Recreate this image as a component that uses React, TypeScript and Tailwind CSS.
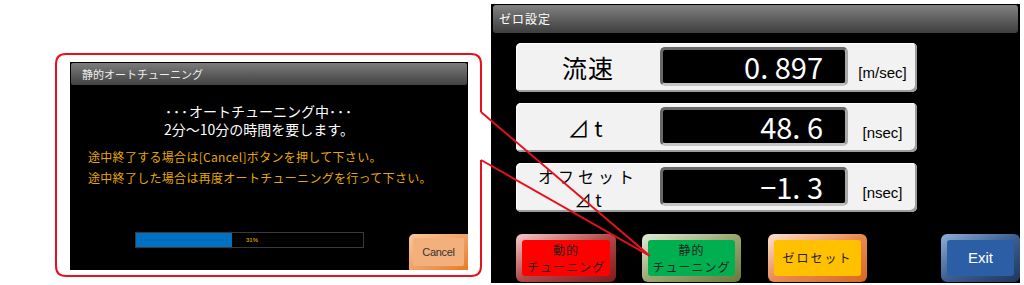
const jp = { fontFamily: '"Noto Sans CJK JP", "Noto Sans", sans-serif' };
const lat = { fontFamily: '"Liberation Sans", Arial, sans-serif' };

function ValueRow({ label, value, unit }: { label: React.ReactNode; value: string; unit: string }) {
  return (
    <div className="flex h-[49px] w-[401px] rounded-[5px] bg-[#f2f2f2] shadow-[inset_-2px_-2px_0_#9c9c9c,inset_1px_1px_0_#ffffff]">
      <div className="flex w-[144px] items-center justify-center text-black" style={jp}>
        {label}
      </div>
      <div className="mt-[4px] flex h-[39px] w-[188px] items-center justify-end rounded-[5px] border-[3px] border-[#686868] border-b-[#c4c4c4] border-r-[#a8a8a8] bg-black pr-[22px] text-[29px] leading-none text-white" style={jp}>
        {value}
      </div>
      <div className="flex flex-1 items-end justify-center pb-[8px] text-[15px] text-black" style={lat}>
        {unit}
      </div>
    </div>
  );
}

function PanelButton({
  outer,
  inner,
  children,
  width,
}: {
  outer: string;
  inner: string;
  children: React.ReactNode;
  width: string;
}) {
  return (
    <div className={`${outer} ${width} h-[48px] rounded-[6px] p-[6px]`}>
      <div className={`${inner} flex h-full w-full items-center justify-center rounded-[3px] text-center`}>
        {children}
      </div>
    </div>
  );
}

export default function App() {
  return (
    <div className="relative flex h-[285px] w-[1024px] overflow-hidden bg-white">
      {/* left: callout with static auto tuning dialog */}
      <div className="w-[491px] shrink-0 pl-[70px] pt-[62px]">
        <div className="flex h-[208px] w-[398px] flex-col bg-black">
          <div className="mx-[1px] mt-[1px] flex h-[22px] items-center rounded-[2px] bg-gradient-to-b from-[#7c7c7c] to-[#424242] pl-[11px] text-[11px] text-[#eeeeee]" style={jp}>
            静的オートチューニング
          </div>
          <div className="pr-[20px] pt-[17px] text-center text-[14px] leading-[18px] text-white" style={jp}>
            <div>
              <span className="tracking-[1px]">･･･</span>オートチューニング中<span className="tracking-[1px]">･･･</span>
            </div>
            <div>2分～10分の時間を要します。</div>
          </div>
          <div className="mt-[11px] pl-[18px] text-[12px] leading-[16px] tracking-[0.3px] text-[#e6a800]" style={jp}>
            <div>途中終了する場合は[Cancel]ボタンを押して下さい。</div>
            <div className="mt-[5px]">途中終了した場合は再度オートチューニングを行って下さい。</div>
          </div>
          <div className="mt-auto flex items-end">
            <div className="mb-[22px] ml-[65px] flex h-[16px] w-[229px] border border-[#3a3a3a]">
              <div className="h-full w-[96px] bg-[#0070c0]" />
              <div className="flex items-center pl-[14px] text-[6px] font-bold text-[#c09000]" style={lat}>
                31%
              </div>
            </div>
            <div className="ml-auto h-[36px] w-[59px] rounded-tl-[5px] bg-gradient-to-br from-[#f8c89c] to-[#e87a20] p-[4px]">
              <div className="flex h-full w-full items-center justify-center rounded-[2px] bg-[#f4b07c] text-[11px] tracking-[-0.3px] text-[#333333]" style={lat}>
                Cancel
              </div>
            </div>
          </div>
        </div>
      </div>

      {/* right: zero setting panel */}
      <div className="mt-[4px] flex h-[279px] w-[529px] flex-col bg-black">
        <div className="mx-[2px] mt-[1px] flex h-[28px] items-center rounded-[3px] bg-gradient-to-b from-[#828282] to-[#3e3e3e] pl-[6px] text-[12px] tracking-[1px] text-white" style={jp}>
          ゼロ設定
        </div>
        <div className="flex flex-col gap-[11px] pl-[25px] pt-[10px]">
          <ValueRow label={<span className="text-[25px] tracking-[1px]">流速</span>} value="0. 897" unit="[m/sec]" />
          <ValueRow label={<span className="pr-[6px] text-[22px]">⊿ t</span>} value="48. 6" unit="[nsec]" />
          <ValueRow
            label={
              <div className="text-center text-[16px] leading-[23px]">
                <div className="tracking-[4px]">オフセット</div>
                <div className="text-[17px]">⊿ t</div>
              </div>
            }
            value="−1. 3"
            unit="[nsec]"
          />
        </div>
        <div className="mt-[22px] flex pl-[25px]">
          <PanelButton width="w-[100px]" outer="bg-gradient-to-br from-[#f2cccc] via-[#b04848] to-[#7e1a1a]" inner="bg-[#ff0000]">
            <div className="text-[12px] leading-[17px] tracking-[1px] text-[#222222]" style={jp}>
              動的
              <br />
              チューニング
            </div>
          </PanelButton>
          <div className="w-[26px]" />
          <PanelButton width="w-[99px]" outer="bg-gradient-to-br from-[#e4ecd6] via-[#9aa870] to-[#6a7a3a]" inner="bg-[#00b050]">
            <div className="text-[12px] leading-[17px] tracking-[1px] text-[#222222]" style={jp}>
              静的
              <br />
              チューニング
            </div>
          </PanelButton>
          <div className="w-[27px]" />
          <PanelButton width="w-[99px]" outer="bg-gradient-to-br from-[#fbe2d0] via-[#e88a50] to-[#d8681e]" inner="bg-[#ffc000]">
            <div className="text-[12px] tracking-[2px] text-[#222222]" style={jp}>
              ゼロセット
            </div>
          </PanelButton>
          <div className="w-[74px]" />
          <PanelButton width="w-[79px]" outer="bg-gradient-to-br from-[#90b0d6] via-[#3c5f90] to-[#1e365c]" inner="bg-[#2c5ea6]">
            <div className="text-[15px] text-white" style={lat}>
              Exit
            </div>
          </PanelButton>
        </div>
      </div>

      {/* callout annotation */}
      <svg className="pointer-events-none absolute inset-0" width="1024" height="285" viewBox="0 0 1024 285">
        <path
          d="M481 160 L481 266 Q481 276 471 276 L66 276 Q56 276 56 266 L56 64 Q56 54 66 54 L471 54 Q481 54 481 64 L481 112"
          fill="none"
          stroke="#e8101c"
          strokeWidth="2"
        />
        <path d="M481 112 L650 256 M481 160 L650 256" fill="none" stroke="#e8101c" strokeWidth="2" />
      </svg>
    </div>
  );
}
